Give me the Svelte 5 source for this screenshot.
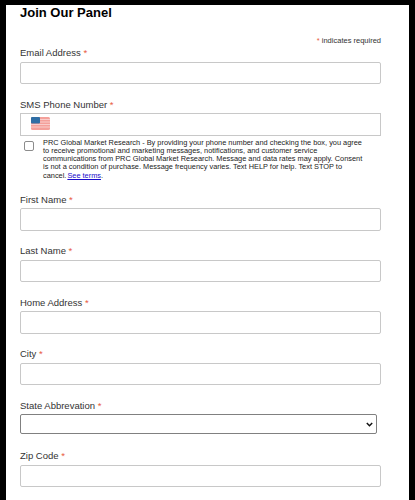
<script>
	const states = ['', 'AL', 'AK', 'AZ', 'CA', 'CO', 'FL', 'GA', 'NY', 'TX'];
	const before = ['First Name', 'Last Name', 'Home Address', 'City'];
</script>

<div class="panel">
	<h2>Join Our Panel</h2>
	<div class="required-note"><span class="star">*</span> indicates required</div>

	<div class="field">
		<label for="email">Email Address <span class="star">*</span></label>
		<input id="email" type="email" />
	</div>

	<div class="field sms">
		<label for="phone">SMS Phone Number <span class="star">*</span></label>
		<div class="phone">
			<svg class="flag" viewBox="0 0 19 13" width="19" height="13" aria-hidden="true">
				<rect width="19" height="13" rx="1.5" fill="#f4a09a" />
				<path d="M0 2.5h19M0 5h19M0 7.5h19M0 10h19" stroke="#f9d3d0" stroke-width="0.9" />
				<rect width="9" height="6.5" rx="1" fill="#2f6ea5" />
			</svg>
			<input id="phone" type="tel" />
		</div>
		<div class="consent">
			<input type="checkbox" id="consent" />
			<p>
				PRC Global Market Research - By providing your phone number and checking the box, you agree
				to receive promotional and marketing messages, notifications, and customer service
				communications from PRC Global Market Research. Message and data rates may apply. Consent
				is not a condition of purchase. Message frequency varies. Text HELP for help. Text STOP to
				cancel.<a href="#terms">See terms</a>.
			</p>
		</div>
	</div>

	{#each before as name}
		<div class="field">
			<label for={name}>{name} <span class="star">*</span></label>
			<input id={name} type="text" />
		</div>
	{/each}

	<div class="field state">
		<label for="state">State Abbrevation <span class="star">*</span></label>
		<div class="select-wrap">
			<select id="state">
				{#each states as s}
					<option>{s}</option>
				{/each}
			</select>
			<svg class="chevron" viewBox="0 0 7 5" width="7" height="5" aria-hidden="true">
				<path d="M0.8 1l2.7 2.7L6.2 1" fill="none" stroke="#111" stroke-width="1.5" />
			</svg>
		</div>
	</div>

	<div class="field">
		<label for="zip">Zip Code <span class="star">*</span></label>
		<input id="zip" type="text" />
	</div>
</div>

<style>
	:global(body) {
		background: #000;
		height: 500px;
		overflow: hidden;
	}
	.panel {
		box-sizing: border-box;
		margin: 5px 6px 0;
		height: 495px;
		padding: 0 28px 0 14px;
		background: #fff;
		overflow: hidden;
		font-family: 'Liberation Sans', Arial, sans-serif;
		color: #333;
	}
	h2 {
		margin: 0;
		font-size: 13px;
		line-height: 15px;
		color: #000;
		font-weight: 700;
	}
	.required-note {
		margin-top: 16px;
		text-align: right;
		font-size: 7.5px;
		line-height: 10px;
	}
	.star {
		color: #e85c41;
	}
	.field {
		margin-bottom: 13.5px;
	}
	.field.sms {
		margin-bottom: 13px;
	}
	.field.state {
		margin-bottom: 15px;
	}
	label {
		display: block;
		font-size: 9.5px;
		line-height: 13px;
		margin-bottom: 2.5px;
	}
	input[type='email'],
	input[type='tel'],
	input[type='text'] {
		display: block;
		box-sizing: border-box;
		width: 100%;
		height: 22.5px;
		border: 1px solid #c8c8c8;
		border-radius: 2px;
		background: #fff;
	}
	.phone {
		position: relative;
	}
	.flag {
		position: absolute;
		left: 11px;
		top: 4px;
	}
	input[type='tel'] {
		border-radius: 0;
	}
	.select-wrap {
		position: relative;
		width: 357px;
	}
	select {
		display: block;
		appearance: none;
		box-sizing: border-box;
		width: 100%;
		height: 20px;
		border: 1px solid #808080;
		border-radius: 2px;
		background: #fff;
		font-size: 10px;
	}
	.chevron {
		position: absolute;
		right: 4px;
		top: 8px;
	}
	.consent {
		display: flex;
		margin-top: 3px;
	}
	.consent input {
		flex: none;
		appearance: none;
		box-sizing: border-box;
		width: 10px;
		height: 10px;
		margin: 2px 9px 0 4px;
		border: 1px solid #8c8c8c;
		border-radius: 2px;
		background: #fff;
	}
	.consent p {
		margin: 0;
		width: 322px;
		font-size: 7.38px;
		line-height: 8.25px;
		color: #222;
	}
	a {
		display: inline-block;
		color: #1a0dcc;
		margin-left: 1px;
	}
</style>
